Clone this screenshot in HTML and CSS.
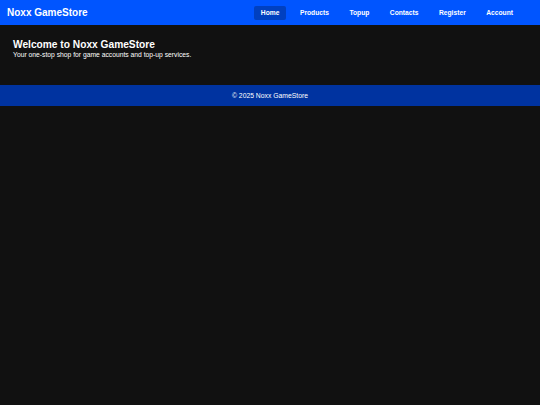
FILE: index.html
```html
<!DOCTYPE html>
<html>
<head>
<meta charset="utf-8">
<link rel="stylesheet" href="styles.css">
</head>
<body>
<header class="topbar">
  <div class="brand">Noxx GameStore</div>
  <nav class="nav">
    <a class="nav-link active" href="#">Home</a>
    <a class="nav-link" href="#">Products</a>
    <a class="nav-link" href="#">Topup</a>
    <a class="nav-link" href="#">Contacts</a>
    <a class="nav-link" href="#">Register</a>
    <a class="nav-link" href="#">Account</a>
  </nav>
</header>
<main class="hero">
  <h2 class="hero-title">Welcome to Noxx GameStore</h2>
  <p class="hero-text">Your one-stop shop for game accounts and top-up services.</p>
</main>
<footer class="footer">© 2025 Noxx GameStore</footer>
</body>
</html>
```
FILE: styles.css
```css
html, body {
  margin: 0;
  padding: 0;
  background: #111111;
  color: #ffffff;
  font-family: "Liberation Sans", Arial, sans-serif;
}
.topbar {
  height: 25px;
  background: #0055ff;
  display: flex;
  align-items: center;
  justify-content: space-between;
  padding: 0 20px 0 7px;
  box-sizing: border-box;
}
.brand {
  font-size: 10px;
  font-weight: bold;
}
.nav {
  display: flex;
  gap: 6.5px;
}
.nav-link {
  color: #ffffff;
  text-decoration: none;
  font-size: 6.7px;
  font-weight: bold;
  padding: 3px 7px;
  border-radius: 2px;
  line-height: 8px;
}
.nav-link.active {
  background: #0040c0;
}
.hero {
  height: 60px;
  padding: 14px 13px 0;
  box-sizing: border-box;
}
.hero-title {
  margin: 0;
  font-size: 10.2px;
  line-height: 12px;
}
.hero-text {
  margin: 0;
  font-size: 6.75px;
  line-height: 7px;
}
.footer {
  height: 21px;
  background: #0033a0;
  display: flex;
  align-items: center;
  justify-content: center;
  font-size: 6.8px;
}
```
